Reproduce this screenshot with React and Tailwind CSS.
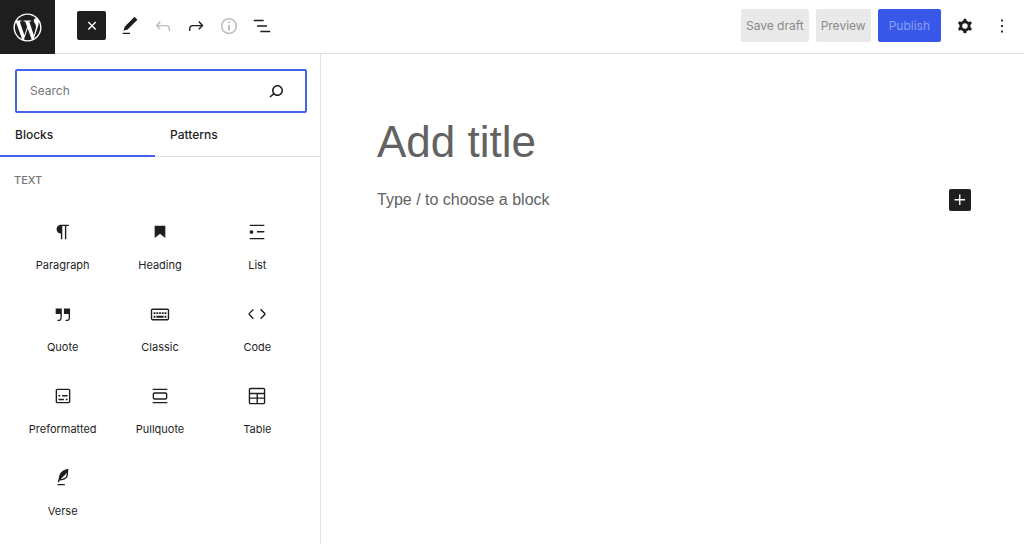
import { useState } from 'react';
import { FaWordpressSimple } from 'react-icons/fa';

const icons = {
    plus: 'M11 12.5V17.5H12.5V12.5H17.5V11H12.5V6H11V11H6V12.5H11Z',
    edit: 'M20.1 5.1L16.9 2 6.2 12.7l-1.3 4.4 4.5-1.3L20.1 5.1zM4 20.8h8v-1.5H4v1.5z',
    undo: 'M18.3 11.7c-.6-.6-1.4-.9-2.3-.9H6.7l2.9-3.3-1.1-1-4.5 5L8.5 16l1-1-2.7-2.7H16c.5 0 .9.2 1.3.5 1 1 1 3.4 1 4.5v.3h1.5v-.2c0-1.5 0-4.3-1.5-5.7z',
    redo: 'M15.6 6.5l-1.1 1 2.9 3.3H8c-.9 0-1.7.3-2.3.9-1.4 1.5-1.4 4.2-1.4 5.6v.2h1.5v-.3c0-1.1 0-3.5 1-4.5.3-.3.7-.5 1.3-.5h9.2L14.5 15l1.1 1.1 4.6-4.6-4.6-5z',
    info: 'M12 3.2c-4.8 0-8.8 3.9-8.8 8.8 0 4.8 3.9 8.8 8.8 8.8 4.8 0 8.8-3.9 8.8-8.8 0-4.8-4-8.8-8.8-8.8zm0 16c-4 0-7.2-3.3-7.2-7.2C4.8 8 8 4.8 12 4.8s7.2 3.3 7.2 7.2c0 4-3.2 7.2-7.2 7.2zM11 17h2v-6h-2v6zm0-8h2V7h-2v2z',
    outline: 'M13.8 5.2H3v1.5h10.8V5.2zm-3.6 12v1.5H21v-1.5H10.2zm7.2-6H6.6v1.5h10.8v-1.5z',
    cog: 'M10.289 4.836A1 1 0 0111.275 4h1.306a1 1 0 01.987.836l.244 1.466c.787.26 1.503.679 2.108 1.218l1.393-.522a1 1 0 011.216.437l.653 1.13a1 1 0 01-.23 1.273l-1.148.944a6.025 6.025 0 010 2.435l1.149.946a1 1 0 01.23 1.272l-.653 1.13a1 1 0 01-1.216.437l-1.394-.522c-.605.54-1.32.958-2.108 1.218l-.244 1.466a1 1 0 01-.987.836h-1.306a1 1 0 01-.986-.836l-.244-1.466a5.995 5.995 0 01-2.108-1.218l-1.394.522a1 1 0 01-1.217-.436l-.653-1.131a1 1 0 01.23-1.272l1.149-.946a6.026 6.026 0 010-2.435l-1.148-.944a1 1 0 01-.23-1.272l.653-1.131a1 1 0 011.217-.437l1.393.522a5.994 5.994 0 012.108-1.218l.244-1.466zM14.929 12a3 3 0 11-6 0 3 3 0 016 0z',
    more: 'M13 19h-2v-2h2v2zm0-6h-2v-2h2v2zm0-6h-2V5h2v2z',
    search: 'M13.5 6C10.5 6 8 8.5 8 11.5c0 1.1.3 2.1.9 3l-3.4 3 1 1.1 3.4-2.9c1 .9 2.2 1.4 3.6 1.4 3 0 5.5-2.5 5.5-5.5C19 8.5 16.5 6 13.5 6zm0 9.5c-2.2 0-4-1.8-4-4s1.8-4 4-4 4 1.8 4 4-1.8 4-4 4z',
    paragraph: 'M18.3 4H9.9v-.1l-.9.2c-2.3.4-4 2.4-4 4.8s1.7 4.4 4 4.8l.7.1V20h1.5V5.5h2.9V20h1.5V5.5h2.7V4z',
    heading: 'M6.2 5.2v13.4l5.8-4.8 5.8 4.8V5.2z',
    list: 'M4 4v1.5h16V4H4zm8 8.5h8V11h-8v1.5zM4 20h16v-1.5H4V20zm4-8c0-1.1-.9-2-2-2s-2 .9-2 2 .9 2 2 2 2-.9 2-2z',
    quote: 'M13 6v6h5.2v4c0 .8-.2 1.4-.5 1.7-.6.6-1.6.6-2.5.5h-.3v1.5h.5c1 0 2.3-.1 3.3-1 .6-.6 1-1.6 1-2.8V6H13zm-9 6h5.2v4c0 .8-.2 1.4-.5 1.7-.6.6-1.6.6-2.5.5h-.3v1.5h.5c1 0 2.3-.1 3.3-1 .6-.6 1-1.6 1-2.8V6H4v6z',
    classic: 'M20 6H4c-1.1 0-2 .9-2 2v9c0 1.1.9 2 2 2h16c1.1 0 2-.9 2-2V8c0-1.1-.9-2-2-2zm.5 11c0 .3-.2.5-.5.5H4c-.3 0-.5-.2-.5-.5V8c0-.3.2-.5.5-.5h16c.3 0 .5.2.5.5v9zM10 10H8v2h2v-2zm-5 2h2v-2H5v2zm8-2h-2v2h2v-2zm-5 6h8v-2H8v2zm6-4h2v-2h-2v2zm3 0h2v-2h-2v2zm0 4h2v-2h-2v2zM5 16h2v-2H5v2z',
    code: 'M20.8 10.7l-4.3-4.3-1.1 1.1 4.3 4.3c.1.1.1.3 0 .4l-4.3 4.3 1.1 1.1 4.3-4.3c.7-.8.7-1.9 0-2.6zM4.2 11.8l4.3-4.3-1-1-4.3 4.3c-.7.7-.7 1.8 0 2.5l4.3 4.3 1.1-1.1-4.3-4.3c-.2-.1-.2-.3-.1-.4z',
    preformatted: 'M18 4H6c-1.1 0-2 .9-2 2v12c0 1.1.9 2 2 2h12c1.1 0 2-.9 2-2V6c0-1.1-.9-2-2-2zm.5 14c0 .3-.2.5-.5.5H6c-.3 0-.5-.2-.5-.5V6c0-.3.2-.5.5-.5h12c.3 0 .5.2.5.5v12zM7 16.5h6V15H7v1.5zm4-4h6V11h-6v1.5zM9 11H7v1.5h2V11zm6 5.5h2V15h-2v1.5z',
    pullquote: 'M18 8H6c-1.1 0-2 .9-2 2v4c0 1.1.9 2 2 2h12c1.1 0 2-.9 2-2v-4c0-1.1-.9-2-2-2zm.5 6c0 .3-.2.5-.5.5H6c-.3 0-.5-.2-.5-.5v-4c0-.3.2-.5.5-.5h12c.3 0 .5.2.5.5v4zM4 4v1.5h16V4H4zm0 16h16v-1.5H4V20z',
    table: 'M19 3H5c-1.1 0-2 .9-2 2v14c0 1.1.9 2 2 2h14c1.1 0 2-.9 2-2V5c0-1.1-.9-2-2-2zM5 4.5h14c.3 0 .5.2.5.5v3.5h-15V5c0-.3.2-.5.5-.5zm8 5.5h6.5v3.5H13V10zm-1.5 3.5h-7V10h7v3.5zm-7 5.5v-4h7v4.5H5c-.3 0-.5-.2-.5-.5zm14.5.5h-6V15h6.5v4c0 .3-.2.5-.5.5z',
    verse: 'M17.8 2l-.9.3c-.1 0-3.6 1-5.2 2.1C10 5.5 9.3 6.5 8.9 7.1c-.6.9-1.7 4.7-1.7 6.3l-.9 2.3c-.2.4 0 .8.4 1 .1 0 .2.1.3.1.3 0 .6-.2.7-.5l.6-1.5c.3 0 .7-.1 1.2-.2.7-.1 1.4-.3 2.2-.5.8-.2 1.6-.5 2.4-.8.7-.3 1.4-.7 1.9-1.2s.8-1.2 1-1.9c.2-.7.3-1.6.4-2.4.1-.8.1-1.7.2-2.5 0-.8.1-1.5.2-2.1V2zm-1.9 5.6c-.1.8-.2 1.5-.3 2.1-.2.6-.4 1-.6 1.3-.3.3-.8.6-1.4.9-.7.3-1.4.5-2.2.8-.6.2-1.3.3-1.8.4L15 7.5c.3-.3.6-.7 1-1.1 0 .4 0 .8-.1 1.2zM6 20h8v-1.5H6V20z',
};

const blocks = [
    { name: 'Paragraph', icon: 'paragraph' },
    { name: 'Heading', icon: 'heading' },
    { name: 'List', icon: 'list' },
    { name: 'Quote', icon: 'quote' },
    { name: 'Classic', icon: 'classic' },
    { name: 'Code', icon: 'code' },
    { name: 'Preformatted', icon: 'preformatted' },
    { name: 'Pullquote', icon: 'pullquote' },
    { name: 'Table', icon: 'table' },
    { name: 'Verse', icon: 'verse' },
];

function Icon({ name, className = 'size-[22px]' }) {
    return (
        <svg viewBox="0 0 24 24" className={className} fill="currentColor" fillRule="evenodd" aria-hidden="true">
            <path d={icons[name]} />
        </svg>
    );
}

function ToolButton({ icon, label, disabled }) {
    return (
        <button
            type="button"
            aria-label={label}
            disabled={disabled}
            className="flex size-[33px] items-center justify-center disabled:text-[#bbbbbb]"
        >
            <Icon name={icon} />
        </button>
    );
}

function Header() {
    return (
        <header className="flex h-[54px] items-stretch border-b border-[#e0e0e0]">
            <a href="#dashboard" aria-label="View Posts" className="-mb-px flex w-[55px] items-center justify-center bg-[#1e1e1e] text-white">
                <FaWordpressSimple className="size-[29px]" />
            </a>

            <div className="flex items-center pb-0.5 pl-[22px]">
                <button
                    type="button"
                    aria-label="Toggle block inserter"
                    className="mr-[7px] flex size-[29px] items-center justify-center rounded-xs bg-[#1e1e1e] text-white"
                >
                    <Icon name="plus" className="size-[22px] rotate-45" />
                </button>
                <ToolButton icon="edit" label="Tools" />
                <ToolButton icon="undo" label="Undo" disabled />
                <ToolButton icon="redo" label="Redo" />
                <ToolButton icon="info" label="Details" disabled />
                <ToolButton icon="outline" label="List View" />
            </div>

            <div className="ml-auto flex items-center gap-[7px] pr-1.5 pb-0.5 text-xs">
                <button type="button" disabled className="h-[33px] rounded-xs bg-[#e9e9e9] px-[5px] text-[#8a8a8a]">
                    Save draft
                </button>
                <button type="button" disabled className="h-[33px] rounded-xs bg-[#e9e9e9] px-[5px] text-[#8a8a8a]">
                    Preview
                </button>
                <button type="button" disabled className="h-[33px] rounded-xs bg-[#3858e9] px-[11px] text-[#8c9ff3]">
                    Publish
                </button>
                <div className="flex gap-1">
                    <ToolButton icon="cog" label="Settings" />
                    <ToolButton icon="more" label="Options" />
                </div>
            </div>
        </header>
    );
}

function Inserter() {
    const [search, setSearch] = useState('');
    const [tab, setTab] = useState('Blocks');

    const visible = blocks.filter((b) => b.name.toLowerCase().includes(search.toLowerCase()));

    return (
        <aside className="w-[321px] shrink-0 border-r border-[#e0e0e0]">
            <div className="pt-[15px] pr-[13px] pl-[15px]">
                <div className="flex h-11 items-center rounded-xs border-2 border-[#4663ea] pr-[17px] pl-[13px]">
                    <input
                        type="search"
                        aria-label="Search for blocks and patterns"
                        placeholder="Search"
                        value={search}
                        onChange={(e) => setSearch(e.target.value)}
                        className="min-w-0 flex-1 text-xs outline-none placeholder:text-[#757575]"
                    />
                    <Icon name="search" className="size-6" />
                </div>
            </div>

            <div role="tablist" className="flex h-11 border-b border-[#e0e0e0]">
                {['Blocks', 'Patterns'].map((name) => (
                    <button
                        key={name}
                        type="button"
                        role="tab"
                        aria-selected={tab === name}
                        onClick={() => setTab(name)}
                        className="-mb-px w-[155px] border-b-2 border-transparent px-[15px] pt-0.5 text-left text-xs font-medium aria-selected:border-[#4663ea]"
                    >
                        {name}
                    </button>
                ))}
            </div>

            <div className="px-[14px]">
                <h2 className="pt-[15px] text-[11px] leading-4 font-medium text-[#757575] uppercase">Text</h2>
                <div className="grid grid-cols-3 pt-[18px]">
                    {visible.map((block) => (
                        <button
                            key={block.name}
                            type="button"
                            className="flex h-[82px] flex-col items-center justify-center gap-[14px] text-[11px] leading-4"
                        >
                            <Icon name={block.icon} />
                            {block.name}
                        </button>
                    ))}
                </div>
            </div>
        </aside>
    );
}

export default function App() {
    const [title, setTitle] = useState('');
    const [content, setContent] = useState('');

    return (
        <div className="flex min-h-screen flex-col bg-white font-['Inter',sans-serif] text-[#1e1e1e]">
            <Header />
            <div className="flex flex-1">
                <Inserter />
                <main className="min-w-0 flex-1 pt-[60px] pr-[53px] pl-14 font-['Liberation_Sans',sans-serif]">
                    <input
                        type="text"
                        aria-label="Add title"
                        placeholder="Add title"
                        value={title}
                        onChange={(e) => setTitle(e.target.value)}
                        className="block h-14 w-full text-[44px] outline-none placeholder:text-[#626262]"
                    />
                    <div className="mt-[18px] flex items-center">
                        <input
                            type="text"
                            aria-label="Add default block"
                            placeholder="Type / to choose a block"
                            value={content}
                            onChange={(e) => setContent(e.target.value)}
                            className="h-6 min-w-0 flex-1 text-base outline-none placeholder:text-[#626262]"
                        />
                        <button
                            type="button"
                            aria-label="Add block"
                            className="flex size-[22px] items-center justify-center rounded-xs bg-[#1e1e1e] text-white"
                        >
                            <Icon name="plus" />
                        </button>
                    </div>
                </main>
            </div>
        </div>
    );
}
